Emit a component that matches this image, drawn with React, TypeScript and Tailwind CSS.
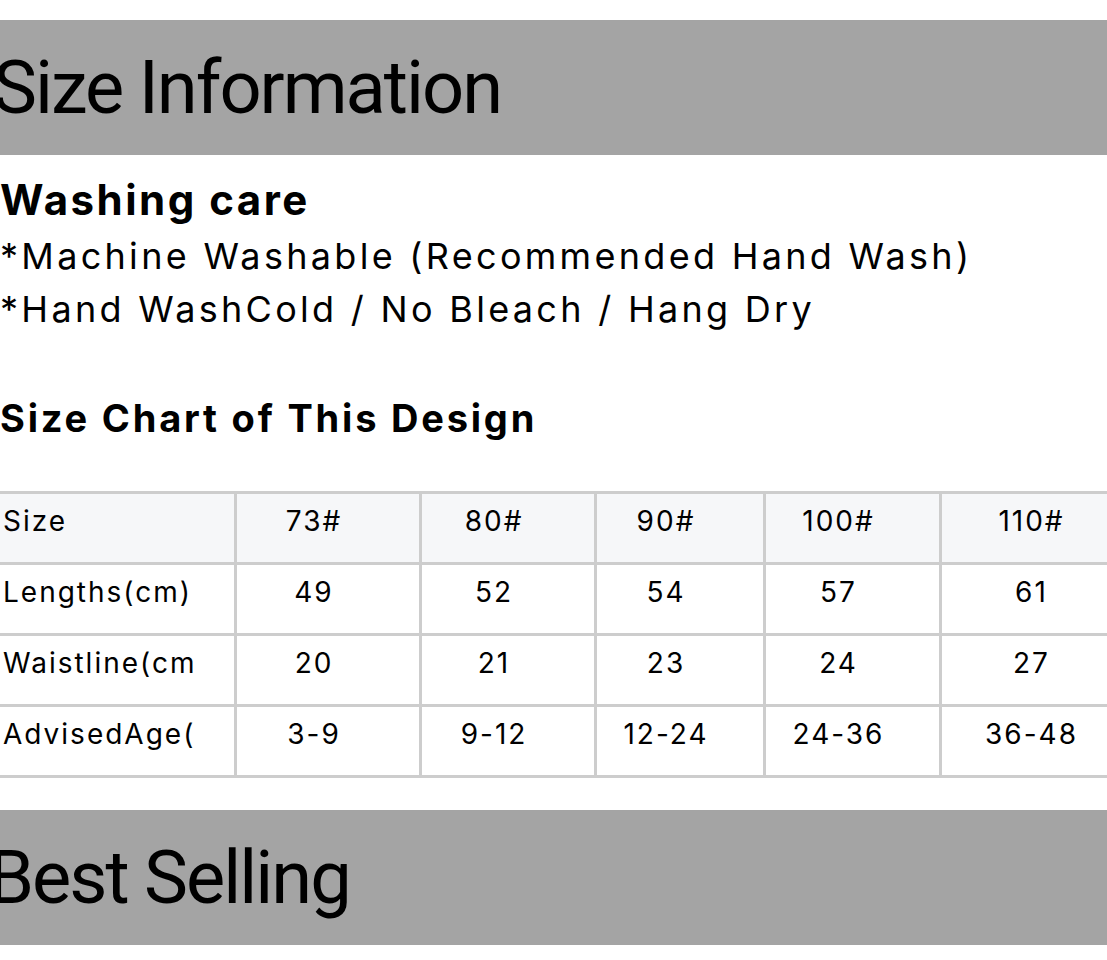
import React from "react";

const COLS = ["73#", "80#", "90#", "100#", "110#"];

const ROWS = [
  { label: "Lengths(cm)", values: ["49", "52", "54", "57", "61"] },
  { label: "Waistline(cm)", values: ["20", "21", "23", "24", "27"] },
  { label: "AdvisedAge(M)", values: ["3-9", "9-12", "12-24", "24-36", "36-48"] },
];

function SectionBar({ title, shift }: { title: string; shift: string }) {
  return (
    <div className="h-[135px] bg-[#a4a4a4] flex items-center">
      <h2 className={`${shift} font-['Roboto',sans-serif] text-[74px] leading-none font-normal text-black tracking-[-2px]`}>{title}</h2>
    </div>
  );
}

function LabelCell({ text, head }: { text: string; head?: boolean }) {
  return (
    <div className={`h-[71px] border-r-[3px] border-b-[3px] border-[#cdcdcd] pl-[3px] pt-[7px] ${head ? "bg-[#f6f7f9]" : ""}`}>
      <div className="w-[193px] overflow-hidden whitespace-nowrap text-[28px] leading-[40px] tracking-[2px]">{text}</div>
    </div>
  );
}

function ValueCell({ text, head }: { text: string; head?: boolean }) {
  return (
    <div className={`h-[71px] border-r-[3px] border-b-[3px] border-[#cdcdcd] pr-[28px] pt-[7px] text-center whitespace-nowrap text-[28px] leading-[40px] tracking-[2px] ${head ? "bg-[#f6f7f9]" : ""}`}>
      {text}
    </div>
  );
}

export default function App() {
  return (
    <div className="w-[1107px] h-[960px] overflow-hidden bg-white pt-[20px] font-['Inter',sans-serif] text-black">
      <SectionBar title="Size Information" shift="ml-[-7px]" />

      <div className="mt-[17px]">
        <h3 className="text-[42px] leading-[55px] font-bold tracking-[2.5px]">Washing care</h3>
        <p className="mt-[3px] text-[36px] leading-[53px] tracking-[3.3px]">*Machine Washable (Recommended Hand Wash)</p>
        <p className="text-[36px] leading-[53px] tracking-[3.3px]">*Hand WashCold / No Bleach / Hang Dry</p>
      </div>

      <h3 className="mt-[58px] text-[38px] leading-[48px] font-bold tracking-[2.8px]">Size Chart of This Design</h3>

      {/* size chart table runs past the right edge */}
      <div className="mt-[49px] w-[1300px] border-t-[3px] border-[#cdcdcd] grid grid-cols-[237px_185px_175px_169px_176px_210px]">
        <LabelCell text="Size" head />
        {COLS.map((c) => (
          <ValueCell key={c} text={c} head />
        ))}
        {ROWS.map((r) => (
          <React.Fragment key={r.label}>
            <LabelCell text={r.label} />
            {r.values.map((v, i) => (
              <ValueCell key={i} text={v} />
            ))}
          </React.Fragment>
        ))}
      </div>

      <div className="mt-[32px]">
        <SectionBar title="Best Selling" shift="ml-[-12px]" />
      </div>
    </div>
  );
}
